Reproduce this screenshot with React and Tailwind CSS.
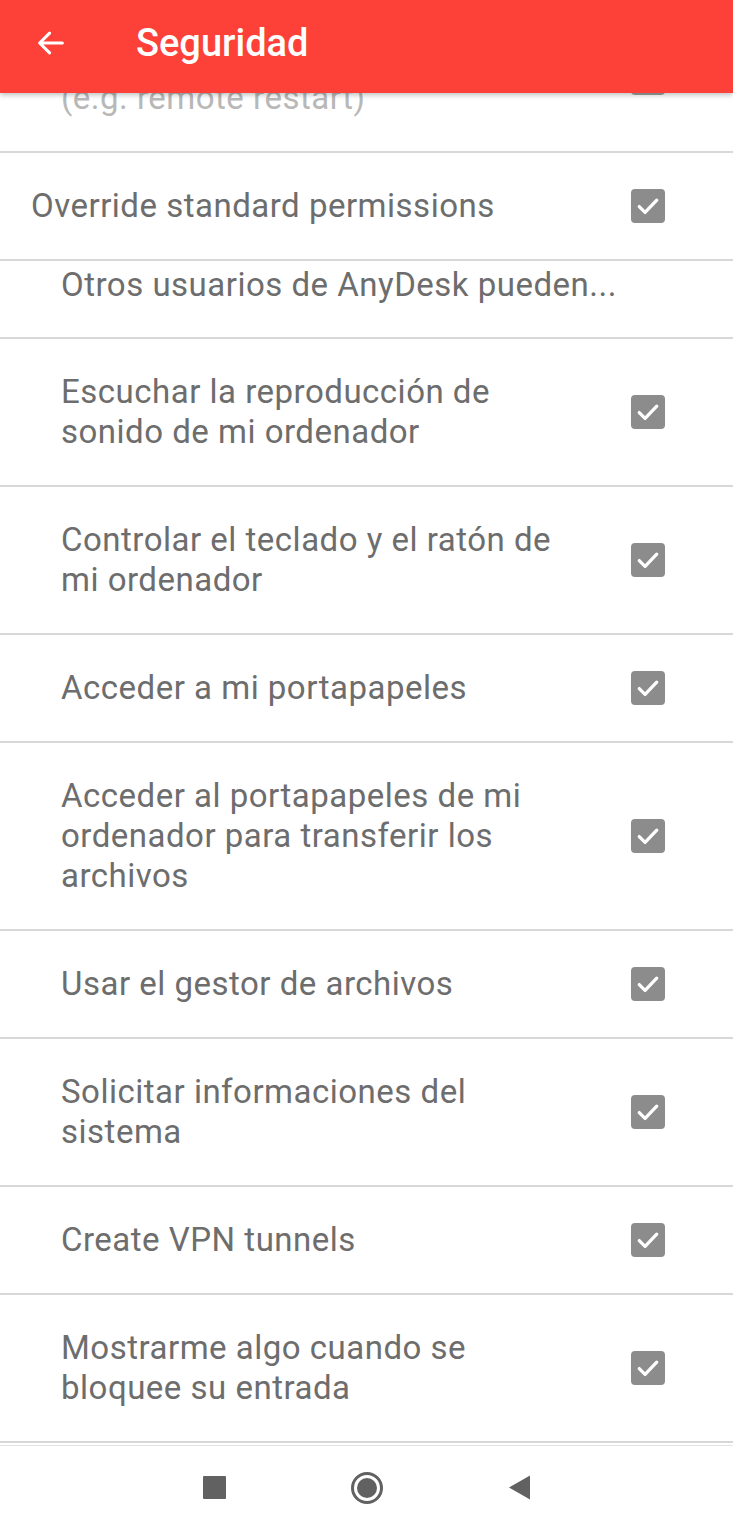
import React from "react";

const rows = [
  { lines: ["Override standard permissions"], check: true, indent: false },
  { lines: ["Otros usuarios de AnyDesk pueden..."], check: false, indent: true, header: true },
  { lines: ["Escuchar la reproducción de", "sonido de mi ordenador"], check: true, indent: true },
  { lines: ["Controlar el teclado y el ratón de", "mi ordenador"], check: true, indent: true },
  { lines: ["Acceder a mi portapapeles"], check: true, indent: true },
  { lines: ["Acceder al portapapeles de mi", "ordenador para transferir los", "archivos"], check: true, indent: true },
  { lines: ["Usar el gestor de archivos"], check: true, indent: true },
  { lines: ["Solicitar informaciones del", "sistema"], check: true, indent: true },
  { lines: ["Create VPN tunnels"], check: true, indent: true },
  { lines: ["Mostrarme algo cuando se", "bloquee su entrada"], check: true, indent: true },
];

function Check({ disabled }) {
  return (
    <div className={`w-[34px] h-[34px] shrink-0 rounded-[4px] flex items-center justify-center ${disabled ? "bg-[#a0a0a0]" : "bg-[#8c8c8c]"}`}>
      <svg width="28" height="28" viewBox="0 0 24 24" fill="none">
        <path d="M4.5 12.5l5 5L19.5 7" stroke="white" strokeWidth="2.8" strokeLinecap="round" strokeLinejoin="round" />
      </svg>
    </div>
  );
}

function Row({ lines, check, indent, header, disabled }) {
  return (
    <div className="border-b-2 border-[#d8d8d8]">
      <div className={`flex items-center justify-between ${header ? "pt-[4px] pb-[32px]" : "py-[33px]"} ${indent ? "pl-[61px]" : "pl-[31px]"} pr-[68px]`}>
        <div className={`text-[33px] leading-[40px] tracking-[0.5px] whitespace-nowrap ${disabled ? "text-[#b8b8b8]" : "text-[#6d6d6d]"}`}>
          {lines.map((l, i) => (
            <div key={i}>{l}</div>
          ))}
        </div>
        {check && <Check disabled={disabled} />}
      </div>
    </div>
  );
}

export default function App() {
  return (
    <div className="w-[733px] h-[1533px] bg-white flex flex-col overflow-hidden" style={{ fontFamily: "Roboto, 'Noto Sans', sans-serif" }}>
      <div className="relative z-10 h-[93px] shrink-0 bg-[#fd4038] flex items-center pb-[8px] shadow-[0_2px_5px_rgba(0,0,0,0.25)]">
        <div className="w-[136px] pl-[34px] flex items-center">
          <svg width="34" height="34" viewBox="0 0 24 24" fill="none">
            <path d="M20 12H4.5M11 5l-7 7 7 7" stroke="white" strokeWidth="2.2" strokeLinecap="round" strokeLinejoin="round" />
          </svg>
        </div>
        <div className="text-white text-[38px] leading-[44px] font-medium">Seguridad</div>
      </div>
      <div className="flex-1 overflow-hidden">
        <div className="-mt-[88px]">
          <Row lines={["Allow system-level actions", "(e.g. remote restart)"]} check disabled indent />
          {rows.map((r, i) => (
            <Row key={i} {...r} />
          ))}
        </div>
      </div>
      <div className="h-[88px] shrink-0 border-t border-[#e4e4e4] bg-white flex items-center justify-center gap-[125px] pb-[4px]">
        <div className="w-[23px] h-[23px] bg-[#616161] rounded-[1px]" />
        <div className="w-[32px] h-[32px] rounded-full border-[3px] border-[#616161] flex items-center justify-center">
          <div className="w-[20px] h-[20px] rounded-full bg-[#616161]" />
        </div>
        <svg width="23" height="25" viewBox="0 0 23 25">
          <path d="M22 0.5V24.5L1 12.5Z" fill="#616161" />
        </svg>
      </div>
    </div>
  );
}
